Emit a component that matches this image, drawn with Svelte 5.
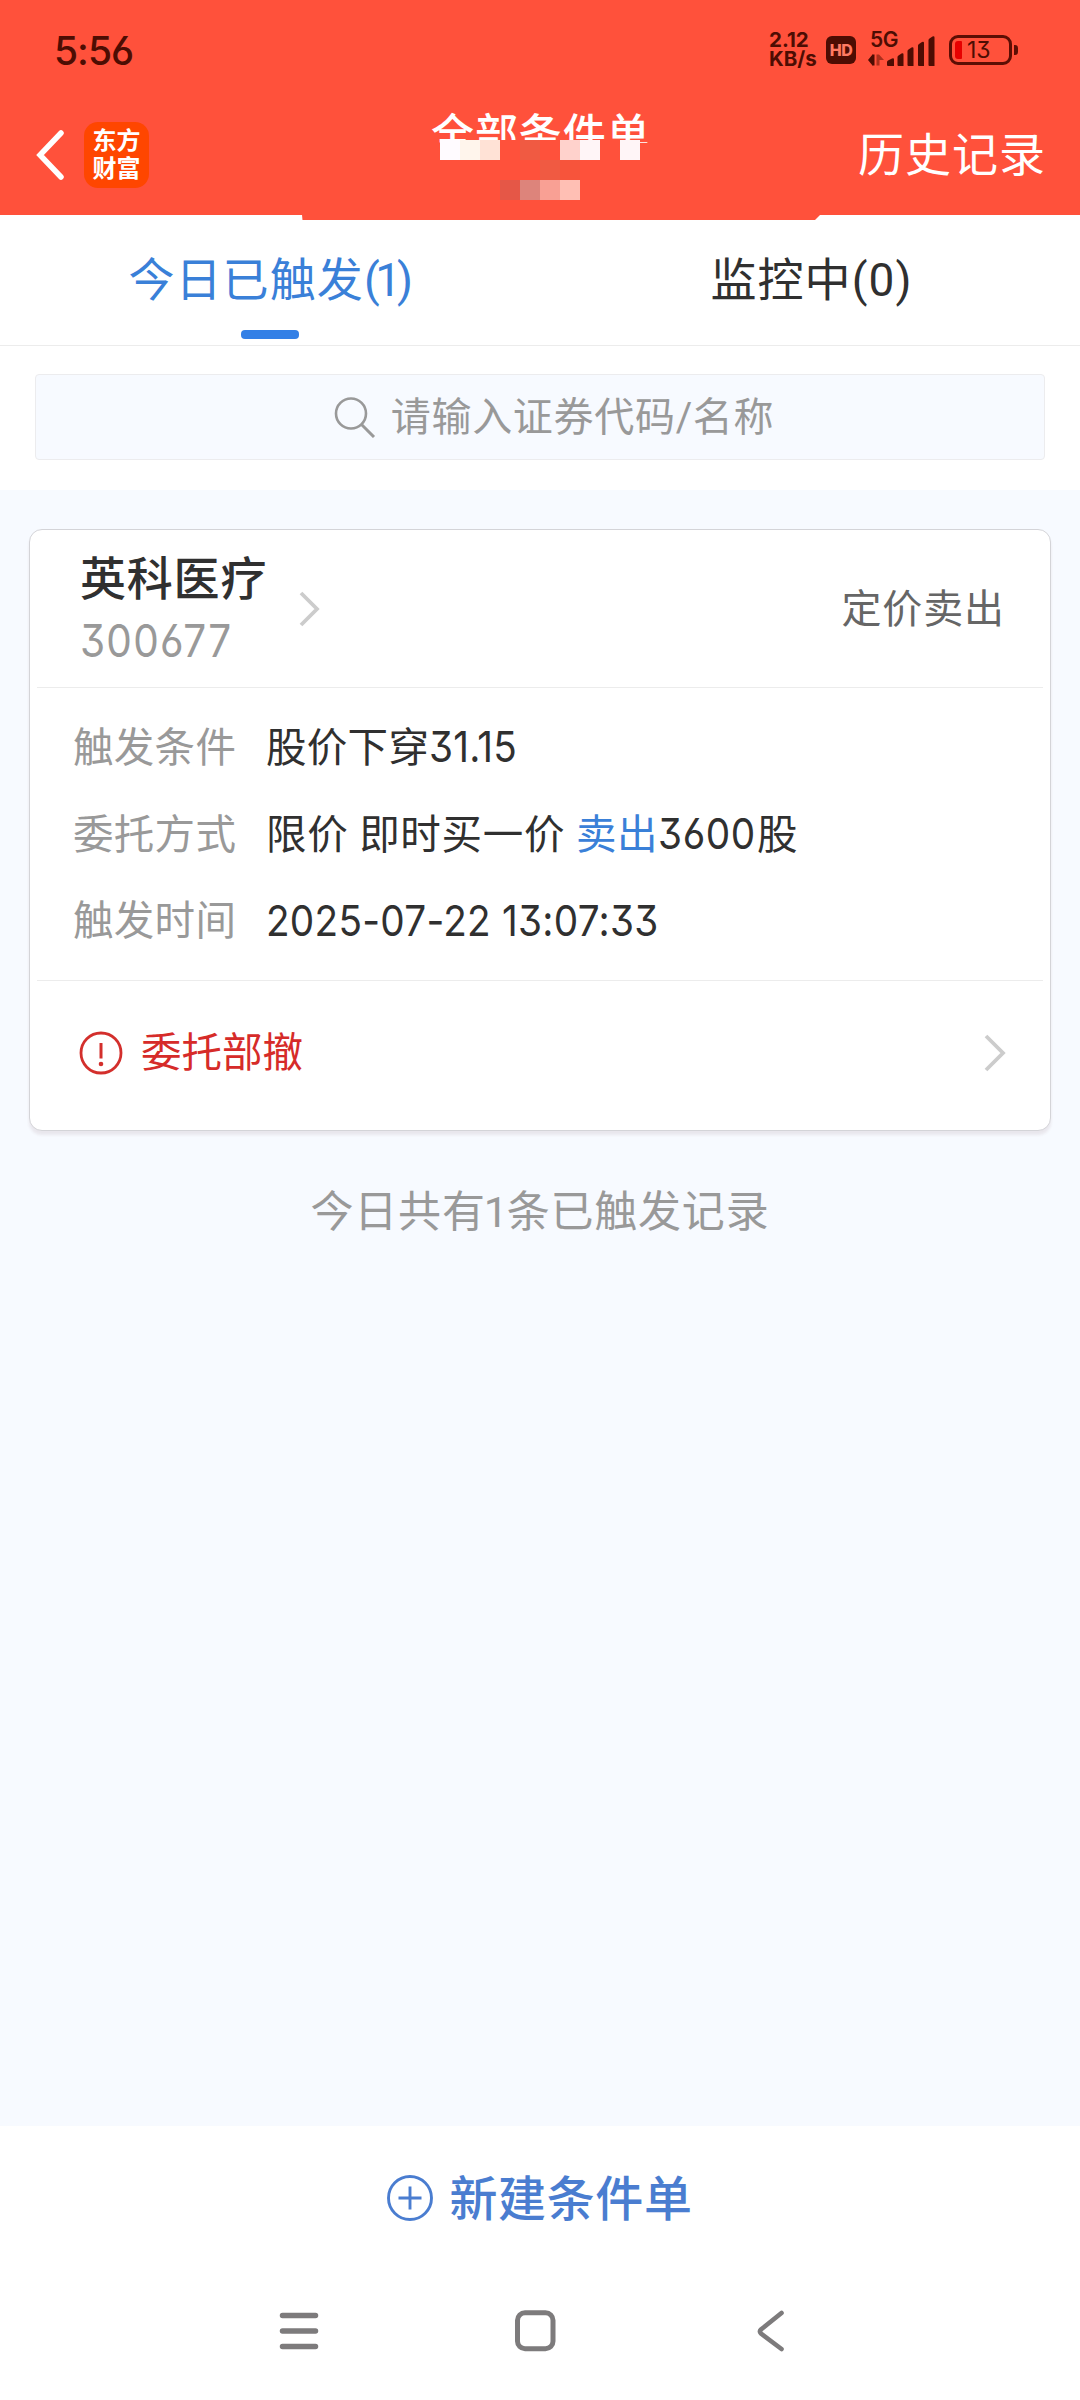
<script>
    let activeTab = 0;

    const tabs = [
        { label: "今日已触发", count: 1 },
        { label: "监控中", count: 0 }
    ];

    const order = {
        name: "英科医疗",
        code: "300677",
        type: "定价卖出",
        price: "31.15",
        amount: "3600",
        time: "2025-07-22 13:07:33",
        status: "委托部撤"
    };

    // Masked account cells: column, row, colour
    const mask = [
        [0, 0, "#fffbff"], [1, 0, "#fff5ec"], [2, 0, "#ffe2d6"],
        [4, 0, "#f05a42"], [6, 0, "#ffd2cc"], [7, 0, "#fff5f7"], [9, 0, "#fff5f7"],
        [5, 1, "#f05a42"], [6, 1, "#f7543b"],
        [3, 2, "#e55747"], [4, 2, "#dd847b"], [5, 2, "#f9a094"], [6, 2, "#ffbfb4"]
    ];
</script>

<div class="page">
    <header>
        <div class="status-bar">
            <span class="clock">5:56</span>
            <div class="status-icons">
                <div class="speed"><span>2.12</span><span>KB/s</span></div>
                <span class="hd">HD</span>
                <div class="network">
                    <span class="gen">5G</span>
                    <svg width="67" height="32" viewBox="0 0 67 32">
                        <path d="M0 25L4.500 19.500V30.500Z M4 19.500H6.500V30.500H4Z" fill="#4d0d03" />
                        <path d="M8.500 19.500H11L16 25H11.500V30.500H8.500Z" fill="#a92f1d" />
                        <g fill="#4d0d03">
                            <path d="M19 27q0-1 1-1.500l4-2q2-.8 2 1V31h-6q-1 0-1-1Z" />
                            <path d="M29.500 22q0-1 1-1.500l3-2q2-.8 2 1V31h-5q-1 0-1-1Z" />
                            <path d="M39.500 16q0-1 1-1.500l3-2q2-.8 2 1V31h-5q-1 0-1-1Z" />
                            <path d="M50 10.500q0-1 1-1.500l3-2q2-.8 2 1V31h-5q-1 0-1-1Z" />
                            <path d="M60.500 5q0-1 1-1.500l3-2q2-.8 2 1V31h-5q-1 0-1-1Z" />
                        </g>
                    </svg>
                </div>
                <div class="battery"><i class="level"></i><span>13</span><i class="nub"></i></div>
            </div>
        </div>
        <div class="nav">
            <svg class="back" width="28" height="52" viewBox="0 0 28 52">
                <path d="M25 4L4 26L25 48" fill="none" stroke="#fff" stroke-width="5.500" stroke-linecap="round" />
            </svg>
            <div class="logo"><span>东方</span><span>财富</span></div>
            <div class="title">全部条件单</div>
            <div class="mask">
                {#each mask as [x, y, color]}
                    <i style="grid-column:{x + 1};grid-row:{y + 1};background:{color}"></i>
                {/each}
            </div>
            <span class="history">历史记录</span>
        </div>
        <svg class="tail" width="518" height="5" viewBox="0 0 518 5">
            <path d="M0 0H518L513 5H.5Z" fill="#ff513b" />
        </svg>
    </header>

    <div class="tabs">
        {#each tabs as tab, i}
            <button class="tab" class:active={i === activeTab} on:click={() => (activeTab = i)}>
                {tab.label}<span class="count" class:tight={tab.count === 1}>({tab.count})</span>
            </button>
        {/each}
    </div>

    <div class="search">
        <div class="search-box">
            <svg width="42" height="42" viewBox="0 0 42 42" fill="none" stroke="#999" stroke-width="2.600">
                <circle cx="17" cy="17.500" r="15" />
                <path d="M27.500 28.500L40 41" stroke-width="3" />
            </svg>
            <span>请输入证券代码/名称</span>
        </div>
    </div>

    <main>
        <div class="card">
            <div class="card-head">
                <div class="stock">
                    <span class="name">{order.name}</span>
                    <span class="code num">{order.code}</span>
                </div>
                <svg width="24" height="38" viewBox="0 0 24 38">
                    <path d="M3 3L19 19L3 35" fill="none" stroke="#ccc" stroke-width="3.800" />
                </svg>
                <span class="type">{order.type}</span>
            </div>
            <div class="details">
                <div class="row">
                    <span class="label">触发条件</span>
                    <span>股价下穿<span class="price num">{order.price}</span></span>
                </div>
                <div class="row">
                    <span class="label">委托方式</span>
                    <span class="mode">限价 即时买一价 <em>卖出</em><span class="amount num">{order.amount}</span>股</span>
                </div>
                <div class="row">
                    <span class="label">触发时间</span>
                    <span class="time num">{order.time}</span>
                </div>
            </div>
            <div class="result">
                <svg width="44" height="44" viewBox="0 0 44 44">
                    <circle cx="22" cy="22" r="20" fill="none" stroke="#d32f2c" stroke-width="2.800" />
                    <path d="M22 12V27.500" stroke="#d32f2c" stroke-width="3" />
                    <circle cx="22" cy="33" r="2.300" fill="#d32f2c" />
                </svg>
                <span>{order.status}</span>
                <svg class="more" width="24" height="40" viewBox="0 0 24 40">
                    <path d="M2 3L19 20L2 37" fill="none" stroke="#ccc" stroke-width="3.800" />
                </svg>
            </div>
        </div>
        <p class="summary">今日共有<span>1</span>条已触发记录</p>
    </main>

    <footer>
        <button class="create">
            <svg width="46" height="46" viewBox="0 0 46 46" fill="none" stroke="#4a7dd0" stroke-width="2.900">
                <circle cx="23" cy="23" r="21.500" />
                <path d="M11.500 23H34.500M23 11.500V34.500" />
            </svg>
            <span>新建条件单</span>
        </button>
        <div class="system-nav">
            <svg width="40" height="44" viewBox="0 0 40 44">
                <path d="M3.500 6.500H36.500M3.500 22H36.500M3.500 37.500H36.500" stroke="#7d7b7c" stroke-width="5.500" stroke-linecap="round" />
            </svg>
            <svg width="42" height="44" viewBox="0 0 42 44">
                <rect x="3.500" y="3.800" width="35.500" height="36" rx="7.500" fill="none" stroke="#7d7b7c" stroke-width="5" />
            </svg>
            <svg width="30" height="44" viewBox="0 0 30 44">
                <path d="M25.500 4L5 20.500Q3 22.500 5 24.500L25.500 40" fill="none" stroke="#7d7b7c" stroke-width="4.600" stroke-linecap="round" />
            </svg>
        </div>
    </footer>
</div>

<style>
    :global(body) {
        background: #fff;
    }

    .page {
        display: flex;
        flex-direction: column;
        width: 1080px;
        height: 2400px;
        background: #fff;
        color: #303030;
        font-family: Roboto, "Noto Sans CJK SC", sans-serif;
        font-size: 41px;
        line-height: 1.2;
        overflow: hidden;
    }

    button {
        border: none;
        background: none;
        padding: 0;
        color: inherit;
        font: inherit;
    }

    svg {
        display: block;
        flex: none;
    }

    /* Flat-topped 3 and open 6, slightly condensed */
    .num {
        display: inline-block;
        font-family: Inter, sans-serif;
        font-feature-settings: "cv09", "cv03", "cv04";
        transform: scaleX(0.9);
        transform-origin: left;
        white-space: nowrap;
    }

    header {
        position: relative;
        height: 215px;
        background: #ff513b;
        color: #fff;
    }

    .tail {
        position: absolute;
        left: 302px;
        top: 215px;
    }

    .status-bar {
        display: flex;
        justify-content: space-between;
        height: 95px;
        padding: 0 62px 0 54px;
        color: #4d0d03;
    }

    .clock {
        font-family: Inter, sans-serif;
        font-feature-settings: "cv03";
        font-size: 39px;
        font-weight: 500;
        line-height: 102px;
        letter-spacing: -1px;
    }

    .status-icons {
        display: flex;
        align-items: flex-start;
        padding-top: 30px;
    }

    .speed {
        display: flex;
        flex-direction: column;
        width: 57px;
        font: 700 20.5px/19px Inter, sans-serif;
    }

    .speed span {
        white-space: nowrap;
    }

    .hd {
        width: 30px;
        height: 28px;
        margin-top: 6px;
        border-radius: 6px;
        background: #4d0d03;
        color: #ff7a62;
        font: 800 16px/29px Inter, sans-serif;
        letter-spacing: -0.5px;
        text-align: center;
    }

    .network {
        position: relative;
        margin: 5px 0 0 12px;
    }

    .gen {
        position: absolute;
        left: 2px;
        top: -5px;
        font: 600 21px/20px Inter, sans-serif;
        letter-spacing: -0.5px;
    }

    .battery {
        position: relative;
        display: flex;
        align-items: center;
        box-sizing: border-box;
        width: 63px;
        height: 30px;
        margin: 5px 6px 0 14px;
        padding-left: 3px;
        border: 3.5px solid #5c0e04;
        border-radius: 9px;
        font-family: Inter, sans-serif;
        font-feature-settings: "cv09";
        font-size: 23px;
        line-height: 24px;
    }

    .level {
        width: 7px;
        height: 18px;
        margin-right: 5px;
        border-radius: 3px 1px 1px 3px;
        background: #e60000;
    }

    .nub {
        position: absolute;
        right: -9px;
        top: 7px;
        width: 4px;
        height: 10px;
        border-radius: 0 3px 3px 0;
        background: #5c0e04;
    }

    .nav {
        position: relative;
        display: flex;
        align-items: center;
        height: 120px;
        padding: 0 34px 0 36px;
    }

    .logo {
        display: flex;
        flex-direction: column;
        align-items: center;
        justify-content: center;
        box-sizing: border-box;
        width: 65px;
        height: 66px;
        margin-left: 20px;
        padding-bottom: 4px;
        border-radius: 14px;
        background: #ff4600;
        font: 700 24px/28px "Noto Sans CJK SC", sans-serif;
    }

    .title {
        position: absolute;
        left: 431px;
        top: 10px;
        height: 38px;
        overflow: hidden;
        font-size: 43px;
        font-weight: 500;
        line-height: 60px;
        letter-spacing: 0.9px;
        white-space: nowrap;
    }

    .mask {
        position: absolute;
        left: 440px;
        top: 45px;
        display: grid;
        grid-template: repeat(3, 20px) / repeat(10, 20px);
        background: #ff513b;
    }

    .history {
        margin-left: auto;
        padding-top: 2px;
        font-size: 46px;
        letter-spacing: 1px;
    }

    .tabs {
        display: grid;
        grid-template-columns: 1fr 1fr;
        height: 130px;
        border-bottom: 1px solid #ececec;
    }

    .tab {
        position: relative;
        padding-left: 3px;
        font-size: 46px;
        line-height: 126px;
        letter-spacing: 1.1px;
    }

    .count.tight {
        letter-spacing: -4.3px;
    }

    .tab.active {
        padding: 0 3px 0 0;
        color: #3a80d8;
    }

    .tab.active::after {
        content: "";
        position: absolute;
        left: 241px;
        bottom: 6px;
        width: 58px;
        height: 9px;
        border-radius: 4px;
        background: #3380e6;
    }

    .search {
        box-sizing: border-box;
        height: 144px;
        padding: 28px 35px 30px;
    }

    .search-box {
        display: flex;
        align-items: center;
        justify-content: center;
        gap: 15px;
        box-sizing: border-box;
        height: 86px;
        padding-left: 28px;
        border: 1px solid #ececee;
        border-radius: 4px;
        background: #f7faff;
        color: #999;
        font-size: 40px;
        letter-spacing: 0.7px;
    }

    .search-box span {
        padding-top: 2px;
    }

    main {
        flex: 1;
        padding: 39px 29px 0;
        background: #f7faff;
    }

    .card {
        box-sizing: border-box;
        height: 602px;
        padding: 0 7px;
        border: 1px solid #d4d4d8;
        border-radius: 13px;
        background: #fff;
        box-shadow: 0 4px 3px rgba(100, 40, 60, 0.09);
    }

    .card-head {
        display: flex;
        align-items: center;
        height: 157px;
        padding: 0 38px 0 43px;
        border-bottom: 1px solid #ececec;
    }

    .stock {
        display: flex;
        flex-direction: column;
        width: 218px;
        padding-top: 3px;
    }

    .name {
        font-size: 46px;
        font-weight: 500;
        line-height: 62px;
        letter-spacing: 0.8px;
    }

    .code {
        color: #999;
        font-size: 45px;
        line-height: 62px;
        letter-spacing: 1.4px;
    }

    .type {
        margin-left: auto;
        padding-top: 2px;
        color: #666;
        font-size: 40px;
        letter-spacing: 0.9px;
    }

    .details {
        height: 275px;
        padding: 17px 38px 0 36px;
        border-bottom: 1px solid #ececec;
    }

    .row {
        display: flex;
        line-height: 86.5px;
        font-size: 40.5px;
        letter-spacing: 0.3px;
    }

    .label {
        width: 193px;
        color: #999;
    }

    .mode {
        letter-spacing: 0.7px;
    }

    .price {
        font-size: 43px;
        line-height: 1;
    }

    .amount {
        margin-right: -10px;
        font-size: 43px;
        line-height: 1;
    }

    .time {
        font-size: 43px;
        line-height: 85px;
    }

    em {
        color: #3a80d8;
        font-style: normal;
    }

    .result {
        display: flex;
        align-items: center;
        height: 143px;
        padding: 0 35px 0 42px;
        color: #d62b29;
    }

    .result span {
        margin-left: 18px;
        padding-top: 2px;
        font-size: 40.5px;
    }

    .more {
        margin-left: auto;
    }

    .summary {
        margin: 51px 0 0;
        color: #999;
        font-size: 43px;
        line-height: 60px;
        letter-spacing: 0.8px;
        text-align: center;
    }

    .summary span {
        margin: 0 -2px;
    }

    footer {
        height: 274px;
    }

    .create {
        display: flex;
        align-items: center;
        justify-content: center;
        gap: 16px;
        width: 100%;
        height: 144px;
        color: #4a7dd0;
        font-size: 48px;
        font-weight: 500;
        letter-spacing: 0.6px;
    }

    .create span {
        padding-top: 3px;
    }

    .system-nav {
        display: flex;
        padding: 39px 0 0 279px;
    }

    .system-nav svg + svg {
        margin-left: 195px;
    }

    .system-nav svg:last-child {
        margin-left: 200px;
    }
</style>
